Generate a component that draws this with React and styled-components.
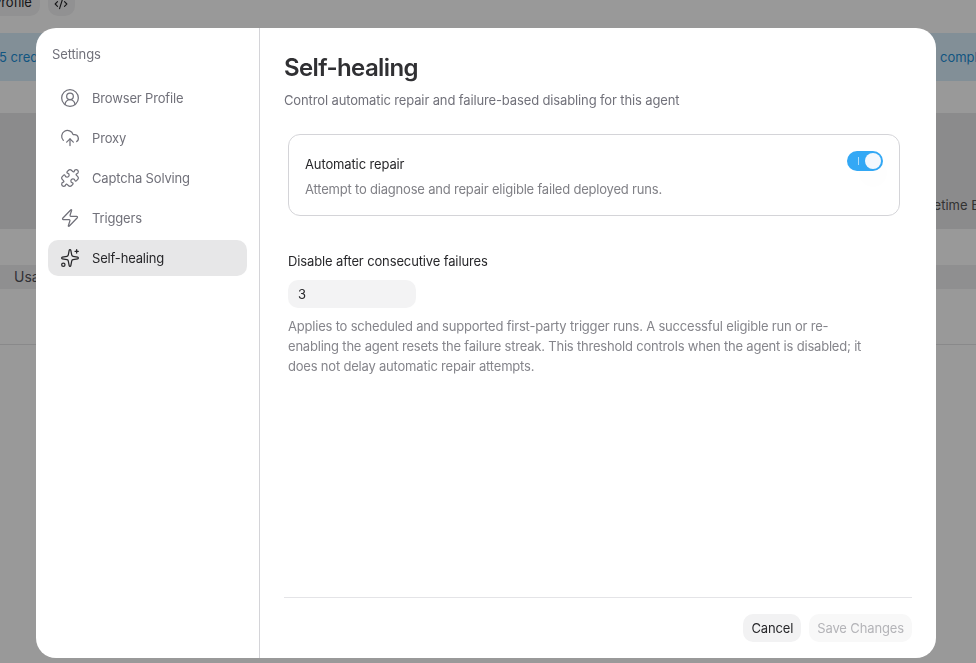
import React from "react";
import styled, { createGlobalStyle } from "styled-components";
import { CircleUserRound, CloudUpload, Puzzle, Zap, Sparkles, CodeXml } from "lucide-react";

const Global = createGlobalStyle`
  html, body { margin: 0; height: 100%; overflow: hidden; background: #fff; }
  body { font-family: Inter, "Liberation Sans", sans-serif; color: #27272a; }
  * { box-sizing: border-box; }
`;

const Page = styled.div`
  width: 976px;
  height: 663px;
  overflow: hidden;
  display: flex;
  flex-direction: column;
`;
const TopBar = styled.div`
  height: 33px;
  display: flex;
  align-items: flex-end;
  gap: 8px;
  margin-left: -27px;
  padding-bottom: 16px;
`;
const TopChip = styled.div`
  height: 34px;
  flex: none;
  display: flex;
  align-items: flex-end;
  padding: 0 8px 6px 20px;
  border-radius: 0 0 10px 10px;
  background: #f2f2f3;
  font-size: 13px;
  line-height: 16px;
  letter-spacing: -0.1px;
  margin-top: -18px;
  align-self: flex-start;
`;
const CodeChip = styled(TopChip)`
  width: 27px;
  padding: 0 0 5px;
  justify-content: center;
  height: 34px;
`;
const Banner = styled.div`
  height: 48px;
  background: #d9eefc;
  color: #1c8fd8;
  font-size: 13px;
  display: flex;
  justify-content: space-between;
  align-items: center;
  padding-bottom: 1px;
  margin-left: -1px;
  margin-right: -21px;
`;
const StatsBlock = styled.div`
  height: 116px;
  margin-top: 32px;
  margin-right: -3px;
  background: #e8e8e9;
  display: flex;
  justify-content: flex-end;
  align-items: flex-end;
  padding: 0 0 15px;
  font-size: 13px;
  line-height: 17px;
  color: #555;
`;
const TabBand = styled.div`
  height: 24px;
  margin-top: 36px;
  background: #efeff0;
  font-size: 14px;
  line-height: 20px;
  padding-left: 14px;
  padding-top: 2px;
  color: #52525b;
`;
const HeadLine = styled.div`
  height: 1px;
  margin-top: 55px;
  background: #e4e4e7;
`;
const Overlay = styled.div`
  position: fixed;
  inset: 0;
  background: rgba(0, 0, 0, 0.4);
  display: flex;
  padding: 28px 40px 5px 36px;
`;
const Dialog = styled.div`
  width: 900px;
  height: 630px;
  background: #fff;
  border-radius: 20px;
  display: flex;
  overflow: hidden;
  letter-spacing: -0.13px;
`;
const Sidebar = styled.aside`
  width: 224px;
  flex: none;
  border-right: 1px solid #d4d4d8;
  padding: 18px 12px 0;
`;
const SideTitle = styled.div`
  font-size: 13px;
  line-height: 16px;
  color: #71717a;
  padding-left: 4px;
  margin-bottom: 18px;
`;
const Nav = styled.nav`
  display: flex;
  flex-direction: column;
  gap: 4px;
`;
const NavItem = styled.div`
  height: 36px;
  display: flex;
  align-items: center;
  gap: 12px;
  padding-left: 12px;
  border-radius: 10px;
  font-size: 13px;
  letter-spacing: -0.17px;
  color: ${(p) => (p.$active ? "#27272a" : "#71717a")};
  background: ${(p) => (p.$active ? "#e7e7e8" : "transparent")};
  svg { flex: none; }
`;
const Main = styled.main`
  flex: 1;
  min-width: 0;
  display: flex;
  flex-direction: column;
  padding: 24px 24px 16px;
`;
const Heading = styled.h1`
  margin: 0;
  font-size: 24px;
  line-height: 32px;
  font-weight: 600;
  letter-spacing: -0.6px;
  color: #303033;
`;
const Sub = styled.p`
  margin: 8px 0 0;
  font-size: 13px;
  line-height: 16px;
  color: #71717a;
`;
const Body = styled.div`
  flex: 1;
  padding: 26px 12px 0 4px;
`;
const Card = styled.div`
  height: 82px;
  border: 1px solid #d4d4d8;
  border-radius: 12px;
  padding: 20px 16px 0;
  display: flex;
  justify-content: space-between;
`;
const CardTitle = styled.div`
  font-size: 13px;
  line-height: 18px;
  color: #27272a;
`;
const CardText = styled.div`
  margin-top: 7px;
  font-size: 13px;
  line-height: 18px;
  letter-spacing: -0.2px;
  color: #808086;
`;
const Switch = styled.div`
  width: 36px;
  height: 20px;
  margin: -4px 0 0;
  border-radius: 10px;
  background: #33a8f5;
  position: relative;
  flex: none;
`;
const Thumb = styled.span`
  position: absolute;
  top: 2px;
  right: 2px;
  width: 16px;
  height: 16px;
  border-radius: 50%;
  background: #f4f8fd;
  box-shadow: 0 12px 22px rgba(0, 0, 0, 0.03);
`;
const OnMark = styled.span`
  position: absolute;
  left: 11px;
  top: 6px;
  width: 1px;
  height: 8px;
  background: rgba(255, 255, 255, 0.6);
`;
const FieldLabel = styled.div`
  margin-top: 36px;
  font-size: 13px;
  line-height: 18px;
  color: #27272a;
`;
const NumberBox = styled.div`
  margin-top: 10px;
  width: 128px;
  height: 28px;
  padding-left: 10px;
  border-radius: 10px;
  background: #f3f3f4;
  font-size: 13px;
  line-height: 28px;
  color: #27272a;
`;
const Help = styled.p`
  margin: 8px 0 0;
  max-width: 580px;
  font-size: 13px;
  line-height: 20px;
  letter-spacing: -0.2px;
  color: #85858b;
`;
const Footer = styled.footer`
  height: 45px;
  border-top: 1px solid #e4e4e7;
  padding-top: 16px;
  display: flex;
  justify-content: flex-end;
  gap: 8px;
`;
const Button = styled.div`
  height: 28px;
  padding: 0 8px;
  border-radius: 10px;
  font-size: 13px;
  line-height: 28px;
  color: ${(p) => (p.$disabled ? "#b4b4b8" : "#27272a")};
  background: ${(p) => (p.$disabled ? "#f8f8f8" : "#f2f2f3")};
`;

export default function App() {
  return (
    <>
      <Global />
      <Page>
        <TopBar>
          <TopChip>Profile</TopChip>
          <CodeChip><CodeXml size={14} color="#27272a" /></CodeChip>
        </TopBar>
        <Banner>
          <span>5 credits</span>
          <span>complete</span>
        </Banner>
        <StatsBlock>Lifetime E</StatsBlock>
        <TabBand>Usage</TabBand>
        <HeadLine />
      </Page>
      <Overlay>
        <Dialog>
          <Sidebar>
            <SideTitle>Settings</SideTitle>
            <Nav>
              <NavItem><CircleUserRound size={20} strokeWidth={1.5} />Browser Profile</NavItem>
              <NavItem><CloudUpload size={20} strokeWidth={1.5} />Proxy</NavItem>
              <NavItem><Puzzle size={20} strokeWidth={1.5} />Captcha Solving</NavItem>
              <NavItem><Zap size={20} strokeWidth={1.5} />Triggers</NavItem>
              <NavItem $active><Sparkles size={20} strokeWidth={1.5} />Self-healing</NavItem>
            </Nav>
          </Sidebar>
          <Main>
            <Heading>Self-healing</Heading>
            <Sub>Control automatic repair and failure-based disabling for this agent</Sub>
            <Body>
              <Card>
                <div>
                  <CardTitle>Automatic repair</CardTitle>
                  <CardText>Attempt to diagnose and repair eligible failed deployed runs.</CardText>
                </div>
                <Switch><OnMark /><Thumb /></Switch>
              </Card>
              <FieldLabel>Disable after consecutive failures</FieldLabel>
              <NumberBox>3</NumberBox>
              <Help>
                Applies to scheduled and supported first-party trigger runs. A successful eligible run or re-enabling the agent resets the failure streak. This threshold controls when the agent is disabled; it does not delay automatic repair attempts.
              </Help>
            </Body>
            <Footer>
              <Button>Cancel</Button>
              <Button $disabled>Save Changes</Button>
            </Footer>
          </Main>
        </Dialog>
      </Overlay>
    </>
  );
}
